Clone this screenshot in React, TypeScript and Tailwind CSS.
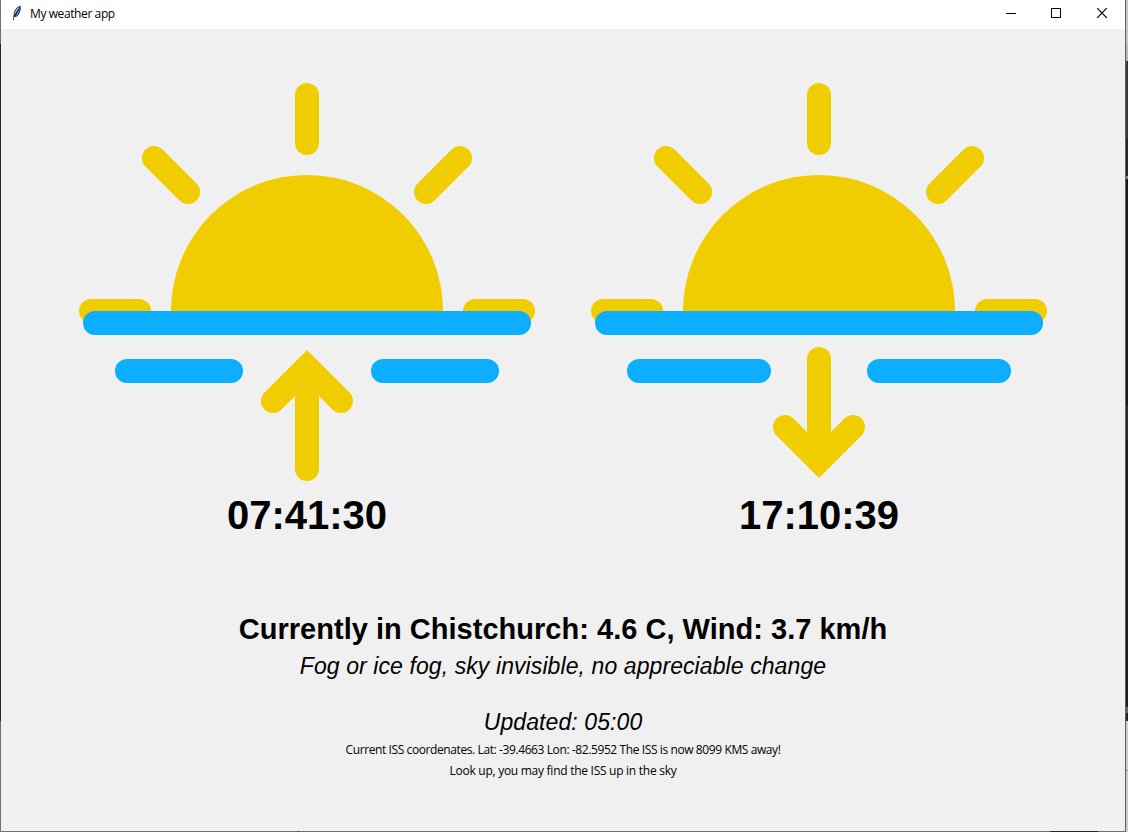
import React from "react";

function SunScene({ setting = false }: { setting?: boolean }) {
  return (
    <svg width="512" height="456" viewBox="0 0 512 456" className="block">
      <g fill="none" stroke="#f0cd00" strokeWidth="24" strokeLinecap="round" strokeLinejoin="miter">
        <path d="M256 66V114" />
        <path d="M103 129L137 163" />
        <path d="M409 129L375 163" />
        <path d="M40 282H88" />
        <path d="M424 282H472" />
        {setting ? (
          <>
            <path d="M256 330V425" />
            <path d="M222 398L256 432L290 398" />
          </>
        ) : (
          <>
            <path d="M256 345V440" />
            <path d="M222 372L256 338L290 372" />
          </>
        )}
      </g>
      <path d="M120 282a136 136 0 0 1 272 0z" fill="#f0cd00" />
      <g fill="#0dadff">
        <rect x="32" y="282" width="448" height="24" rx="12" />
        <rect x="64" y="330" width={setting ? 144 : 128} height="24" rx="12" />
        <rect x={setting ? 304 : 320} y="330" width={setting ? 144 : 128} height="24" rx="12" />
      </g>
    </svg>
  );
}

function Feather() {
  return (
    <svg width="12" height="16" viewBox="0 0 12 16" className="block">
      <path d="M2.8 12.2C1.8 8 4.2 2.6 9.5 .6C10.400 4 9 8.8 6 11.600Z" fill="#1c2733" />
      <path d="M3.400 10.500C3.200 7 5.400 3.200 8.700 1.700L6.200 6.500Z" fill="#8fc0f2" />
      <path d="M4.400 11L8.900 3C9 6.300 7.600 9.200 5.500 10.900Z" fill="#4a83c6" />
      <path d="M2.600 15.400V12.200L5 8.400L7.600 4" fill="none" stroke="#0d151e" strokeWidth=".8" />
    </svg>
  );
}

export default function App() {
  return (
    <div className="flex h-[832px] w-[1128px] overflow-hidden bg-[#f0f0f0] text-black">
      <div className="flex w-px shrink-0 flex-col">
        <div className="h-[44px] bg-[#707070]" />
        <div className="h-[677px] bg-[#252526]" />
        <div className="flex-1 bg-[#707070]" />
      </div>
      <div className="flex w-[1124px] shrink-0 flex-col">
        <header className="flex h-[29px] shrink-0 items-start bg-white">
          <div className="ml-[10px] mt-[5px]"><Feather /></div>
          <div className="ml-[7px] mt-[5px] whitespace-nowrap font-['Open_Sans',sans-serif] text-[12px] leading-[18px] tracking-[-0.4px]">My weather app</div>
          <svg width="102" height="11" viewBox="0 0 102 11" className="ml-auto mr-[17px] mt-[8px] block" fill="none" stroke="black" shapeRendering="crispEdges">
            <path d="M0 5.5H10" />
            <rect x="45.5" y=".5" width="9" height="9" />
            <path d="M91.2 .2L100.8 9.8M100.8 .2L91.2 9.8" strokeWidth="1.2" shapeRendering="auto" />
          </svg>
        </header>
        <main className="flex flex-1 flex-col items-center font-['Liberation_Sans',Arial,sans-serif]">
          <div className="flex">
            <section className="flex w-[512px] flex-col items-center">
              <SunScene />
              <div className="h-[60px] text-[40px] font-bold leading-[60px]">07:41:30</div>
            </section>
            <section className="flex w-[512px] flex-col items-center">
              <SunScene setting />
              <div className="h-[60px] text-[40px] font-bold leading-[60px]">17:10:39</div>
            </section>
          </div>
          <div className="mt-[64px] whitespace-nowrap text-[29px] font-bold leading-[40px] tracking-[0.02px]">Currently in Chistchurch: 4.6 C, Wind: 3.7 km/h</div>
          <div className="whitespace-nowrap text-[23px] italic leading-[34px] tracking-[0.09px]">Fog or ice fog, sky invisible, no appreciable change</div>
          <div className="mt-[22px] whitespace-nowrap text-[23px] italic leading-[34px] tracking-[0.09px]">Updated: 05:00</div>
          <div className="whitespace-nowrap font-['Open_Sans',sans-serif] text-[12px] leading-[21px] tracking-[-0.4px]">Current ISS coordenates. Lat: -39.4663 Lon: -82.5952 The ISS is now 8099 KMS away!</div>
          <div className="whitespace-nowrap font-['Open_Sans',sans-serif] text-[12px] leading-[21px] tracking-[-0.27px]">Look up, you may find the ISS up in the sky</div>
        </main>
        <div className="flex h-px shrink-0 bg-[#707070]">
          <div className="ml-[297px] w-px bg-[#252526]" />
          <div className="ml-[751px] w-[48px] bg-[#252526]" />
        </div>
      </div>
      <div className="w-px shrink-0 bg-[#606060]" />
      <div className="flex w-[2px] shrink-0 flex-col">
        <div className="h-[43px] bg-[#c8c5c5]" />
        <div className="h-[18px] bg-[#9fc5c8]" />
        <div className="h-[77px] bg-[#353b3d]" />
        <div className="h-[38px] bg-[#232829]" />
        <div className="h-[3px] bg-[#858585]" />
        <div className="h-[226px] bg-[#171a1c]" />
        <div className="h-[35px] bg-[#232c3c]" />
        <div className="h-[267px] bg-[#1c1c1d]" />
        <div className="h-[6px] bg-[#666666]" />
        <div className="h-[8px] bg-[#252526]" />
        <div className="h-[49px] bg-[#cccccc]" />
        <div className="h-px bg-[#999999]" />
        <div className="flex-1 bg-[#cccccc]" />
      </div>
    </div>
  );
}
